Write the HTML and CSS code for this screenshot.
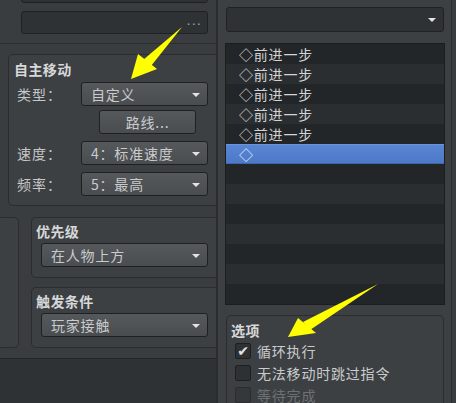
FILE: index.html
```html
<!DOCTYPE html>
<html lang="zh">
<head>
<meta charset="utf-8">
<link rel="stylesheet" href="styles.css">
</head>
<body>
<div class="app">
  <div class="left">
    <div class="top">
      <div class="field field-a"></div>
      <div class="field field-b"><span class="dots">...</span></div>
    </div>
    <div class="middle">
      <div class="group g-move">
        <div class="gtitle">自主移动</div>
        <div class="form">
          <div class="lbl">类型：</div>
          <div class="combo"><span>自定义</span><i class="arrow"></i></div>
          <div></div>
          <div class="btn">路线...</div>
          <div class="lbl">速度：</div>
          <div class="combo"><span>4：标准速度</span><i class="arrow"></i></div>
          <div class="lbl">频率：</div>
          <div class="combo"><span>5：最高</span><i class="arrow"></i></div>
        </div>
      </div>
      <div class="lower">
        <div class="stub"></div>
        <div class="col">
          <div class="group g-small">
            <div class="gtitle">优先级</div>
            <div class="combo wide"><span>在人物上方</span><i class="arrow"></i></div>
          </div>
          <div class="group g-small">
            <div class="gtitle">触发条件</div>
            <div class="combo wide"><span>玩家接触</span><i class="arrow"></i></div>
          </div>
        </div>
      </div>
    </div>
    <div class="bottom"></div>
  </div>
  <div class="splitter"></div>
  <div class="right">
    <div class="combo dark"><span></span><i class="arrow"></i></div>
    <div class="list">
      <div class="row">◇前进一步</div>
      <div class="row">◇前进一步</div>
      <div class="row">◇前进一步</div>
      <div class="row">◇前进一步</div>
      <div class="row">◇前进一步</div>
      <div class="row sel">◇</div>
      <div class="row"></div>
      <div class="row"></div>
      <div class="row"></div>
      <div class="row"></div>
      <div class="row"></div>
      <div class="row"></div>
      <div class="row"></div>
    </div>
    <div class="group g-opts">
      <div class="gtitle">选项</div>
      <div class="check"><span class="box on">✔</span><span>循环执行</span></div>
      <div class="check"><span class="box"></span><span>无法移动时跳过指令</span></div>
      <div class="check disabled"><span class="box"></span><span>等待完成</span></div>
    </div>
  </div>
  <div class="edge"></div>
</div>
<svg class="overlay" width="456" height="403" viewBox="0 0 456 403">
  <g fill="#ffff00">
    <polygon points="131,79 138,54 157,69"/>
    <polygon points="143,60 151,66 182,27"/>
    <polygon points="288,337 298,318 316,333"/>
    <polygon points="303,322 310,330 378,284"/>
  </g>
</svg>
</body>
</html>
```
FILE: styles.css
```css
* { box-sizing: border-box; }
html, body { margin: 0; padding: 0; }
body {
  width: 456px;
  height: 403px;
  overflow: hidden;
  background: #303336;
  font-family: "Noto Sans CJK SC", "Noto Sans", sans-serif;
  font-size: 14px;
  color: #c9cbcd;
  position: relative;
}
.app { display: flex; height: 403px; overflow: hidden; }
.left {
  width: 216px;
  flex: none;
  overflow: hidden;
  display: flex;
  flex-direction: column;
  background: #3a3d40;
}
.top {
  height: 44px;
  flex: none;
  padding: 0 8px 0 21px;
  border-bottom: 1px solid #2b2d30;
  display: flex;
  flex-direction: column;
}
.field {
  width: 187px;
  height: 23px;
  background: #2f3235;
  border: 1px solid #1f2123;
  border-radius: 3px;
  flex: none;
}
.field-a { margin-top: -20px; }
.field-b {
  margin-top: 8px;
  display: flex;
  align-items: center;
  justify-content: flex-end;
  padding-right: 5px;
}
.dots {
  color: #9fa1a3;
  font-size: 13px;
  letter-spacing: 1px;
  line-height: 1;
  font-family: "DejaVu Sans", sans-serif;
  margin-top: -4px;
}
.middle {
  height: 315px;
  flex: none;
  border-bottom: 1px solid #232528;
  background: #3a3d40;
  padding-top: 10px;
}
.group {
  background: #3d4043;
  border: 1px solid #2a2c2f;
  border-radius: 5px;
}
.gtitle {
  font-weight: bold;
  line-height: 20px;
  height: 20px;
  letter-spacing: 0.4px;
  color: #d6d8da;
}
.g-move {
  margin-left: 8px;
  width: 230px;
  height: 152px;
  padding: 4px 8px 0 5px;
}
.form {
  margin-top: 3px;
  display: grid;
  grid-template-columns: 64px 127px;
  grid-auto-rows: 24px;
  row-gap: 4px;
  padding-left: 3px;
}
.form .lbl { line-height: 24px; letter-spacing: 1px; color: #c4c6c8; }
.form > :nth-child(5), .form > :nth-child(6) { margin-top: 3px; }
.form > :nth-child(7), .form > :nth-child(8) { margin-top: 6px; }
.combo {
  height: 24px;
  flex: none;
  background: linear-gradient(#56595c, #4a4d50);
  border: 1px solid #1e2022;
  border-radius: 3px;
  display: flex;
  align-items: center;
  padding: 0 7px 0 9px;
  letter-spacing: 0.8px;
  color: #c9cbcd;
}
.combo span { flex: 1; white-space: nowrap; line-height: 22px; }
.arrow {
  width: 0; height: 0;
  border-left: 4px solid transparent;
  border-right: 4px solid transparent;
  border-top: 4px solid #e2e3e4;
  margin-top: 1px;
}
.btn {
  width: 97px;
  margin-left: 18px;
  height: 24px;
  background: linear-gradient(#56595c, #4a4d50);
  border: 1px solid #1e2022;
  border-radius: 3px;
  text-align: center;
  line-height: 22px;
  letter-spacing: 0.8px;
}
.lower {
  margin-top: 11px;
  display: flex;
  gap: 12px;
}
.stub {
  width: 29px;
  margin-left: -10px;
  height: 131px;
  background: #3d4043;
  border: 1px solid #2a2c2f;
  border-radius: 5px;
  flex: none;
}
.col { display: flex; flex-direction: column; gap: 9px; }
.g-small {
  width: 200px;
  height: 61px;
  padding: 3px 0 0 4px;
}
.g-small .combo.wide { width: 167px; margin-left: 5px; margin-top: 2px; }
.bottom { flex: 1; background: #2f3235; }
.splitter {
  width: 2px;
  flex: none;
  background: #2a2c2f;
}
.right {
  width: 233px;
  flex: none;
  background: #3d4043;
  padding-top: 7px;
  display: flex;
  flex-direction: column;
  overflow: hidden;
}
.combo.dark {
  margin-left: 8px;
  width: 218px;
  height: 25px;
  background: #2f3235;
  border-color: #1f2123;
}
.list {
  margin-top: 11px;
  margin-left: 7px;
  width: 220px;
  height: 262px;
  border: 1px solid #1b1d1f;
  background: #232628;
  overflow: hidden;
  flex: none;
}
.row {
  height: 20px;
  line-height: 20px;
  padding-left: 13px;
  background: #232628;
  letter-spacing: 0.8px;
  color: #d2d4d6;
}
.row:nth-child(even) { background: #2b2e31; }
.row.sel {
  background: linear-gradient(#5886d4, #4c7ac8);
  border-top: 1px solid #6a93d8;
  border-bottom: 1px solid #3f67aa;
  line-height: 18px;
  color: #e8eef8;
}
.g-opts {
  margin-top: 10px;
  margin-left: 8px;
  width: 218px;
  height: 120px;
  flex: none;
  padding: 4px 0 0 4px;
}
.check {
  display: flex;
  align-items: center;
  height: 22px;
  gap: 6px;
  padding-left: 4px;
  letter-spacing: 0.8px;
}
.box {
  width: 16px; height: 16px;
  background: #2e3134;
  border: 1px solid #1d1f21;
  border-radius: 2px;
  flex: none;
  display: flex;
  align-items: center;
  justify-content: center;
  font-size: 14px;
  font-weight: bold;
  letter-spacing: 0;
  color: #e0e2e4;
  font-family: "DejaVu Sans", sans-serif;
}
.check.disabled { color: #6d7073; }
.check.disabled .box { background: #35383b; border-color: #2a2c2f; }
.edge {
  flex: 1;
  background: #3a3d40;
  border-left: 1px solid #2b2d30;
}
.overlay { position: absolute; left: 0; top: 0; pointer-events: none; }
```
